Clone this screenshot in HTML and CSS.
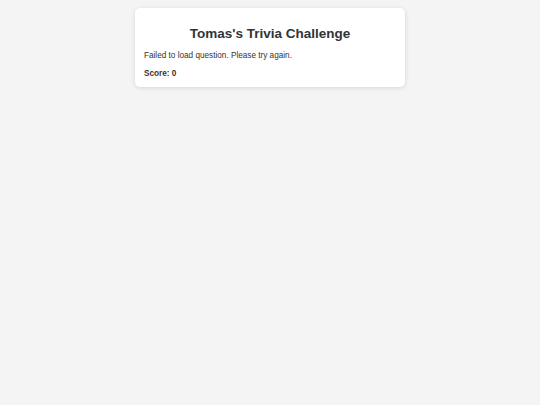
FILE: index.html
```html
<html>
    <head>
        <meta charset="UTF-8">
        <title>Tomas's Trivia Challenge</title>
        <link rel="stylesheet" href="styles.css">
    </head>
    <body>
        <div class="container">
            <h1>Tomas's Trivia Challenge</h1>
            <div id="question">Failed to load question. Please try again.</div>
            <div id="score">Score: 0</div>
        </div>
    </body>
</html>
```

FILE: styles.css
```css
* {
    box-sizing: border-box;
}
body {
    margin: 0;
    padding: 8px 0;
    background: #f4f4f4;
    font-family: "Liberation Sans", Arial, sans-serif;
    color: #333;
}
.container {
    width: 270px;
    margin: 0 auto;
    background: #fff;
    border-radius: 5px;
    box-shadow: 0 1px 5px rgba(0,0,0,0.12);
    padding: 18px 9px 8.5px 9px;
}
h1 {
    font-size: 13.5px;
    text-align: center;
    margin: 0 0 9.5px 0;
}
#question {
    font-size: 8.2px;
    margin-bottom: 9.5px;
}
#score {
    font-size: 8.2px;
    font-weight: bold;
}
```
